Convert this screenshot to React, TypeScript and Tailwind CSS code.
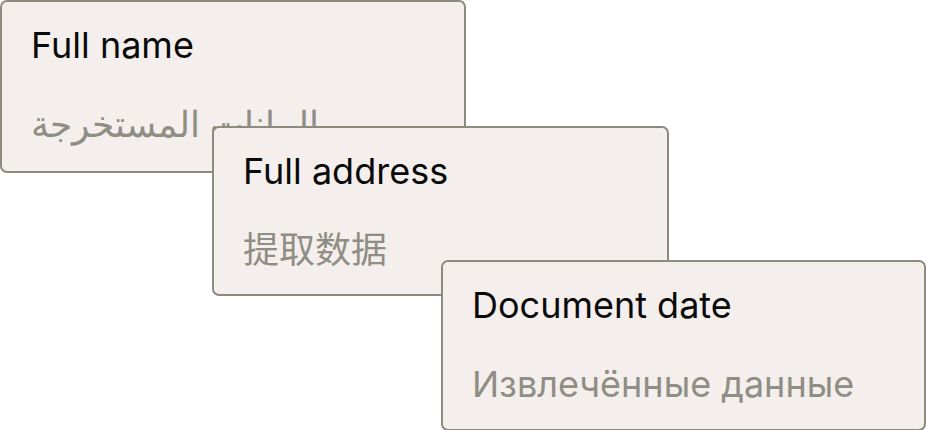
const cards = [
  { title: 'Full name', value: 'البيانات المستخرجة', box: 'ml-0 mt-0 w-[466px] h-[173px]', dir: 'rtl' as const },
  { title: 'Full address', value: '提取数据', box: 'ml-[212px] -mt-[47px] w-[457px] h-[170px]', dir: 'ltr' as const },
  { title: 'Document date', value: 'Извлечённые данные', box: 'ml-[441px] -mt-[36px] w-[485px] h-[171px]', dir: 'ltr' as const },
]

export default function App() {
  return (
    <div className="w-[926px] h-[430px] overflow-hidden bg-white font-['Inter','Noto_Sans_CJK_SC',sans-serif]">
      <div className="flex flex-col">
        {cards.map(c => (
          <div
            key={c.title}
            className={`${c.box} relative shrink-0 rounded-[7px] border-2 border-[#8c8b80] bg-[#f4efec] px-[29px] pt-[21px]`}
          >
            <p className="text-[36px] leading-[44px] text-[#0a0a0a]">{c.title}</p>
            <p
              dir={c.dir}
              className="mt-[35px] text-[36px] leading-[44px] text-[#8f8d84] text-left"
            >
              {c.value}
            </p>
          </div>
        ))}
      </div>
    </div>
  )
}
